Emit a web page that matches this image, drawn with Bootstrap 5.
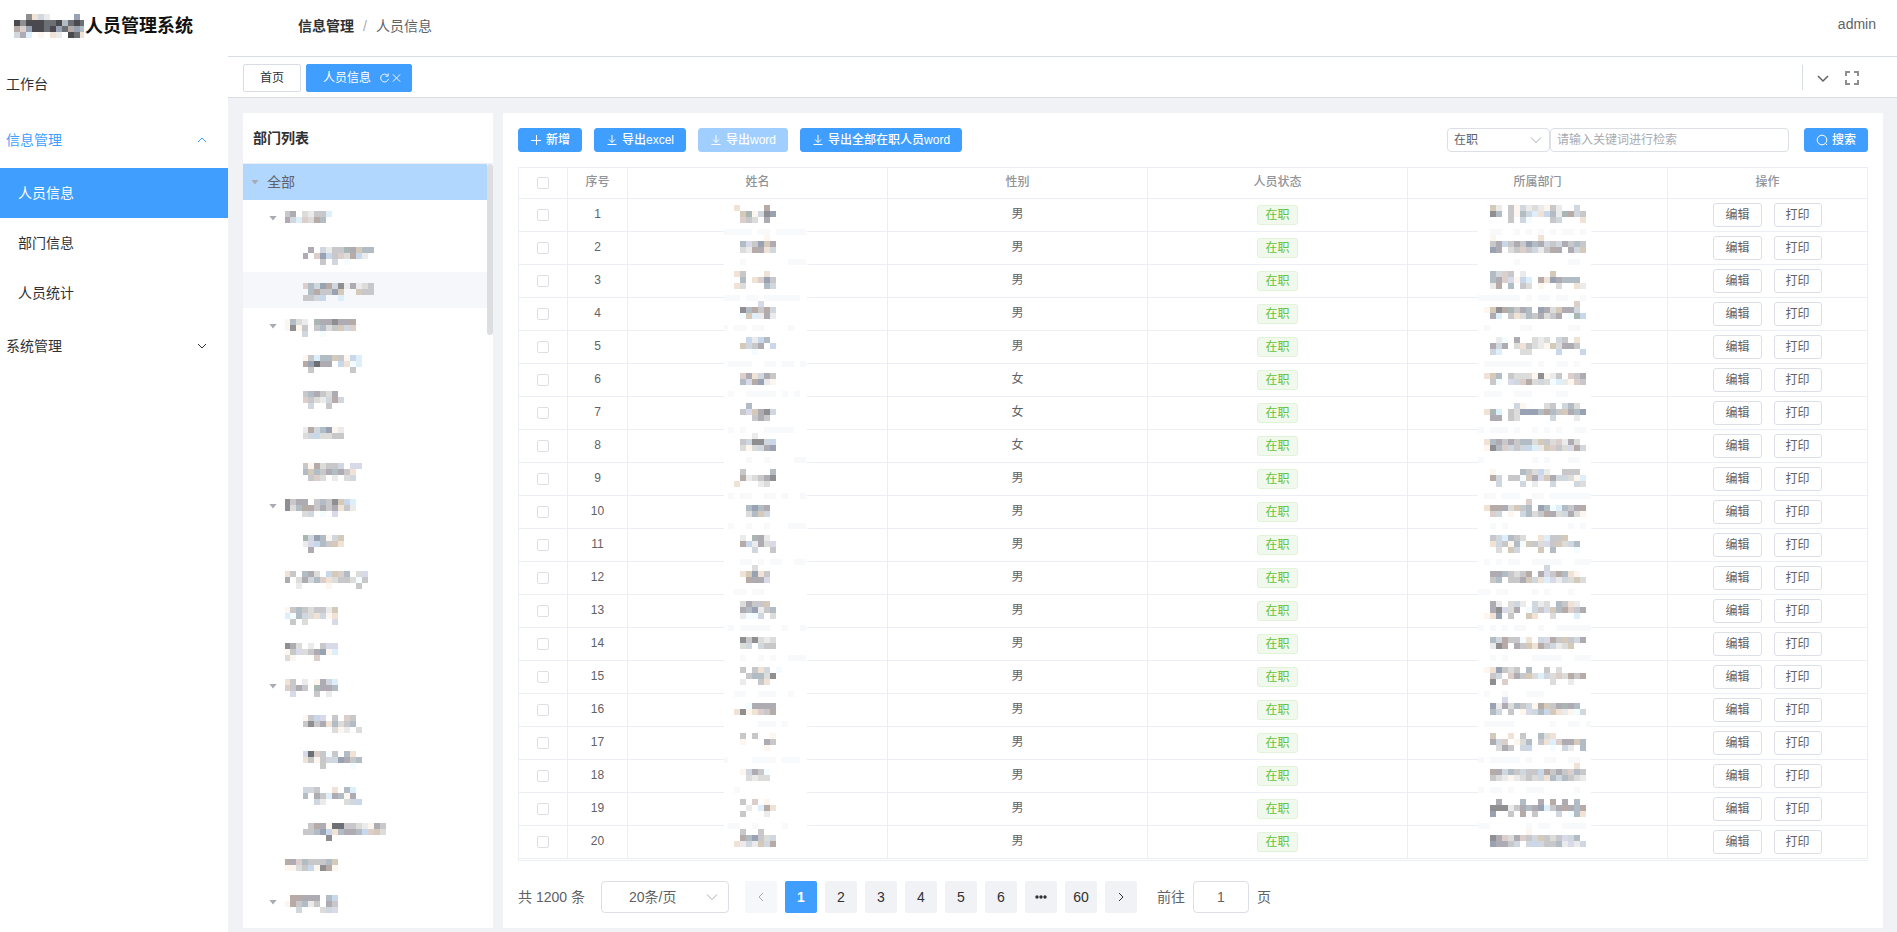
<!DOCTYPE html>
<html lang="zh-CN">
<head>
<meta charset="utf-8">
<meta name="viewport" content="width=device-width, initial-scale=1">
<title>人员管理系统</title>
<link href="https://cdn.jsdelivr.net/npm/bootstrap@5.3.0/dist/css/bootstrap.min.css" rel="stylesheet">
<style>
:root{--blue:#409eff;--line:#ebeef5;--edge:#dcdfe6;--txt:#606266;--dark:#303133}
body{font-family:"Liberation Sans","Noto Sans CJK SC",sans-serif;font-size:14px;line-height:20px;color:var(--txt);background:#fff}
a{text-decoration:none;color:inherit}
svg{display:block;flex:none}
.ico{fill:none;stroke:currentColor;stroke-width:1}
.page{min-width:0}
.g5{gap:5px}.g12{gap:12px}
/* sidebar */
.side{width:228px;flex:none;color:var(--dark)}
.brand{height:56px;padding:0 0 4px 14px;font-size:18px;font-weight:700;color:#111}
.brand svg{margin-right:1px}
.menu-main{height:56px;padding:0 20px 0 6px}
.menu-sub{height:50px;padding-left:18px}
.menu-sub.active{background:var(--blue);color:#fff}
.blue{color:var(--blue)}
/* top bars */
.topbar{height:57px;border-bottom:1px solid #d8dce5;padding:0 21px 4px 70px}
.topbar b{color:var(--dark)}
.slash{padding:0 9px;color:#a8abb2}
.tabs{height:41px;border-bottom:1px solid #d8dce5;padding:1px 38px 0 15px}
.tab-item{height:28px;border:1px solid #d8dce5;border-radius:2px;padding:0 16px;font-size:12px;color:var(--dark)}
.tab-item.active{background:var(--blue);border-color:var(--blue);color:#fff;padding:0 9px 0 16px}
.tab-item svg{width:11px}
.tab-item svg + svg{margin-left:1px}
.tab-tools{border-left:1px solid #d8dce5;height:25px;padding-left:14px;gap:16px}
.tab-tools .ico{stroke-width:1.5}
/* body */
.work{background:#f0f2f6;padding:15px 14px 4px 15px;gap:10px}
.panel{background:#fff}
.dept{width:250px;flex:none}
.dept h2{font-size:14px;font-weight:700;height:51px;line-height:50px;margin:0;padding-left:10px;border-bottom:1px solid var(--line);color:var(--dark)}
.tree{height:764px;overflow:hidden;position:relative}
.node{height:36px;margin-right:6px;padding-left:8px}
.node.lv1{padding-left:26px}.node.lv2{padding-left:44px}
.node.current{background:#b1d7ff}.node.hover{background:#f5f7fa}
.caret-box{width:8px;height:5px;margin-right:8px;flex:none}
.caret-box.open{background:#a8abb2;clip-path:polygon(0 0,100% 0,50% 100%)}
.thumb{position:absolute;right:0;top:0;width:6px;height:171px;border-radius:3px;background:#dddee0}
.main-panel{padding:15px;min-width:0}
.btn-s{height:24px;padding:0 11px;font-size:12px;line-height:20px;border-radius:3px;display:inline-flex;align-items:center;justify-content:center;gap:4px;border:1px solid var(--edge);background:#fff;color:var(--txt)}
.btn-p,.btn-p:disabled{background:var(--blue);border-color:var(--blue);color:#fff;font-weight:500}
.btn-p:disabled{background:#a0cfff;border-color:#a0cfff;opacity:1}
.fld{border:1px solid var(--edge);border-radius:4px;color:var(--txt);background:#fff;outline:0}
.fld::placeholder{color:#a8abb2}
.toolbar .fld{height:24px;font-size:12px;padding:0 6px}
.find-state{width:103px}.find-word{width:239px}.find-go{margin-left:15px}
.pick{position:relative}
.pick select{appearance:none;width:100%}
.pick svg{position:absolute;right:8px;top:50%;margin-top:-6px;color:#a8abb2;pointer-events:none}
.grid-wrap{border:1px solid var(--line);border-right:0;padding-bottom:1px;margin-top:15px}
.data{width:100%;table-layout:fixed;border-collapse:separate;border-spacing:0;text-align:center;font-size:12px;line-height:20px}
.data .w-ck{width:49px}.data .w-no{width:60px}.data .w-op{width:200px}
.data th,.data td{border-right:1px solid var(--line);border-bottom:1px solid var(--line);padding:0;position:relative}
.data th{height:31px;color:#909399;padding-bottom:2px;font-weight:500}
.data td{height:33px;padding-bottom:3px}
.data td.ops,.data td.st,.data td.ck{padding-bottom:0}
.box{appearance:none;width:12px;height:12px;border:1px solid var(--edge);border-radius:2px;background:#fff;display:block;margin:0 auto}
.data th .box{margin-top:2px}
.tagx{display:inline-block;height:20px;line-height:18px;padding:0 7px;border:1px solid #e1f3d8;background:#f0f9eb;color:#67c23a;border-radius:3px;vertical-align:middle}
.mz{position:absolute;top:0;overflow:hidden}
.mz.nm{left:calc(50% - 34px)}.mz.dp{left:calc(50% - 60px)}
/* pagination */
.pager{margin-top:20px;gap:8px}
.pager .fld{height:32px;font-size:14px}
.page-size{width:128px}
.page-size select{padding-left:27px}
.page-size svg{right:11px}
.goto-label{margin-left:12px}
.goto-box{width:56px}
.pg{min-width:32px;height:32px;border:0;border-radius:2px;background:#f0f2f5;color:var(--dark);padding:0;display:flex;align-items:center;justify-content:center}
.pg.active{background:var(--blue);color:#fff;font-weight:700}
.pg:disabled{background:#f5f7fa;color:#a8abb2}
</style>
</head>
<body>
<div class="d-flex min-vh-100">
  <aside class="side">
    <div class="brand d-flex align-items-center"><span id="logo"></span><span>人员管理系统</span></div>
    <nav>
      <a href="#" class="menu-main d-flex align-items-center">工作台</a>
      <a href="#" class="menu-main d-flex align-items-center justify-content-between blue">信息管理
        <svg class="ico" width="12" height="12" viewBox="0 0 12 12"><path d="M2 8l4-4 4 4"/></svg></a>
      <a href="#" class="menu-sub d-flex align-items-center active">人员信息</a>
      <a href="#" class="menu-sub d-flex align-items-center">部门信息</a>
      <a href="#" class="menu-sub d-flex align-items-center">人员统计</a>
      <a href="#" class="menu-main d-flex align-items-center justify-content-between">系统管理
        <svg class="ico" width="12" height="12" viewBox="0 0 12 12"><path d="M2 4l4 4 4-4"/></svg></a>
    </nav>
  </aside>
  <div class="page flex-grow-1 d-flex flex-column">
    <header class="topbar d-flex align-items-center justify-content-between">
      <nav class="d-flex"><a href="#"><b>信息管理</b></a><span class="slash">/</span><span>人员信息</span></nav>
      <a href="#" class="pb-1">admin</a>
    </header>
    <div class="tabs d-flex align-items-center justify-content-between">
      <div class="d-flex g5">
        <a href="#" class="tab-item d-flex align-items-center">首页</a>
        <a href="#" class="tab-item active d-flex align-items-center">人员信息
          <svg class="ico ms-2" width="12" height="12" viewBox="0 0 12 12"><path d="M9.600 3.500A4.300 4.300 0 1 0 10.300 7M10 1v3H7"/></svg>
          <svg class="ico" width="12" height="12" viewBox="0 0 12 12"><path d="M2 2l8 8M10 2l-8 8"/></svg></a>
      </div>
      <div class="tab-tools d-flex align-items-center">
        <svg class="ico" width="12" height="12" viewBox="0 0 12 12"><path d="M1 4l5 5 5-5"/></svg>
        <svg width="14" height="14" viewBox="0 0 14 14" fill="none" stroke="#8c8e92" stroke-width="2"><path d="M1 5V1h4M9 1h4v4M13 9v4H9M5 13H1V9"/></svg>
      </div>
    </div>
    <main class="work d-flex flex-grow-1">
      <section class="panel dept">
        <h2>部门列表</h2>
        <div class="tree" id="tree"><div class="thumb"></div>
          <div class="node current d-flex align-items-center"><span class="caret-box open"></span>全部</div>
        </div>
      </section>
      <section class="panel main-panel flex-grow-1">
        <div class="toolbar d-flex align-items-center justify-content-between">
          <div class="d-flex g12">
            <button class="btn-s btn-p"><svg class="ico" width="12" height="12" viewBox="0 0 12 12"><path d="M1 6.500h10M6.500 1v10"/></svg><span>新增</span></button>
            <button class="btn-s btn-p"><svg class="ico" width="12" height="12" viewBox="0 0 12 12"><path d="M1.500 10.500h9M6 1v7.500M3 5.500l3 3 3-3"/></svg><span>导出excel</span></button>
            <button class="btn-s btn-p" disabled><svg class="ico" width="12" height="12" viewBox="0 0 12 12"><path d="M1.500 10.500h9M6 1v7.500M3 5.500l3 3 3-3"/></svg><span>导出word</span></button>
            <button class="btn-s btn-p"><svg class="ico" width="12" height="12" viewBox="0 0 12 12"><path d="M1.500 10.500h9M6 1v7.500M3 5.500l3 3 3-3"/></svg><span>导出全部在职人员word</span></button>
          </div>
          <div class="d-flex">
            <label class="pick find-state"><select class="fld" aria-label="状态"><option>在职</option></select><svg class="ico" width="12" height="12" viewBox="0 0 12 12"><path d="M1 3.500l5 5 5-5"/></svg></label>
            <input class="fld find-word" placeholder="请输入关键词进行检索" aria-label="关键词">
            <button class="btn-s btn-p find-go"><svg class="ico" width="12" height="12" viewBox="0 0 12 12"><circle cx="6" cy="6" r="4.800"/><path d="M9.500 9.500l1.500 1.500"/></svg><span>搜索</span></button>
          </div>
        </div>
        <div class="grid-wrap">
          <table class="data">
            <colgroup><col class="w-ck"><col class="w-no"><col><col><col><col><col class="w-op"></colgroup>
            <thead><tr><th><input type="checkbox" class="box" aria-label="全选"></th><th>序号</th><th>姓名</th><th>性别</th><th>人员状态</th><th>所属部门</th><th>操作</th></tr></thead>
            <tbody id="rows"></tbody>
          </table>
        </div>
        <div class="pager d-flex align-items-center">
          <span>共 1200 条</span>
          <label class="pick page-size ms-2"><select class="fld" aria-label="每页条数"><option>20条/页</option></select><svg class="ico" width="12" height="12" viewBox="0 0 12 12"><path d="M1 3.500l5 5 5-5"/></svg></label>
          <button class="pg ms-2" disabled aria-label="上一页"><svg class="ico" width="12" height="12" viewBox="0 0 12 12"><path d="M8 2L4 6l4 4"/></svg></button>
          <button class="pg active">1</button><button class="pg">2</button><button class="pg">3</button><button class="pg">4</button><button class="pg">5</button><button class="pg">6</button>
          <button class="pg" aria-label="更多"><svg width="14" height="14" viewBox="0 0 14 14" fill="currentColor"><circle cx="3" cy="7" r="1.700"/><circle cx="7" cy="7" r="1.700"/><circle cx="11" cy="7" r="1.700"/></svg></button>
          <button class="pg">60</button>
          <button class="pg" aria-label="下一页"><svg class="ico" width="12" height="12" viewBox="0 0 12 12"><path d="M4 2l4 4-4 4"/></svg></button>
          <label for="goto" class="goto-label">前往</label>
          <input id="goto" class="fld goto-box text-center" value="1">
          <span>页</span>
        </div>
      </section>
    </main>
  </div>
</div>
<script src="https://cdn.jsdelivr.net/npm/bootstrap@5.3.0/dist/js/bootstrap.bundle.min.js"></script>
<script>
// Private values are shown as mosaics: one letter per 6px tile, "/" starts a new line.
const tone={a:'#8f8f92',b:'#aeacb2',c:'#c8c7c9',d:'#dcdcda',e:'#ebebeb',f:'#b2bcc4',g:'#d0d7df',h:'#dceffb',i:'#c8d8ea',j:'#b6aba6',k:'#d5c9ba',l:'#f1e2d6',m:'#fcf6ee',n:'#dccecb',o:'#98a2b2',p:'#d8daea',q:'#aab6b3',r:'#6c7074',s:'#f3fcff',R:'#4a4a4e','~':'#f8f9fb'};
function mosaic(map,w,h,x0,y0,cls,back){
  let s=back||'';
  map.split('/').forEach((l,r)=>[...l].forEach((c,i)=>{if(tone[c])s+=`<rect x="${x0+i*6}" y="${y0+r*6}" width="6" height="6" fill="${tone[c]}"/>`}));
  return `<svg class="${cls}" width="${w}" height="${h}" shape-rendering="crispEdges" aria-hidden="true">${s}</svg>`;
}
document.getElementById('logo').innerHTML=mosaic('..alge....o/RaRRRrrRfrRr/jnoRRrRorjof/gbh.m.le.Rrl',70,24,0,0,'');
const tree=[
[1,1,'cb.decch/bghndjf'],[2,0,'....b.geccqbkff/...b.noicndjie/......c.g.s'],[2,0,'...nfgojgaebedc/....fjccok..kcc/...ccgi..h'],
[1,1,'mfde.qbbabbj/mamc.cfdckgn/...g..s'],[2,0,'...mchffkcmih/...jorbb.ilsh/....c......c'],[2,0,'...cfbcdb/...ncdegjg/....g..c'],
[2,0,'...ejgfome/...dgiddcc'],[2,0,'...cmjdccg.pp/...fkfcbfbcl/....cnd.e.dg'],[1,1,'acbb.cfcakih/adfjjcbcblce/...dg.s.p'],
[2,0,'...qgofmgk/...epifckl/....b'],[1,0,'lc.fbd.iknf.dp/b.dbgfnldccdsc/..e....m....c'],[1,0,'mcfcdccek/hsfgdlgml/.c.d....p'],
[1,0,'abd.e.cpp/mcpdcbomh/dm...n'],[1,1,'lc.e.mbgh/ncbc.qbbf/.p...c.e'],[2,0,'...mcip.c.nc/...cacblfdcf/........dme.d'],
[2,0,'...prncsc.fl/...lcmcggobcf/......c....s'],[2,0,'...ggc..l.fh/...f.bchbfmb/.....ge...dgi'],
[2,0,'....cjbmrrccdembc/...ccfoilfbbfinkd/.......a'],[1,0,'jbnfcccfk/mmdcimajm'],[1,1,'.jjbbb.fi/mjcfec.bc/..g...dgp']];
document.getElementById('tree').insertAdjacentHTML('beforeend',tree.map(([lv,open,m],i)=>{
  const cut=lv===2?19:1;
  return `<div class="node lv${lv} d-flex align-items-center${i===2?' hover':''}"><span class="caret-box${open?' open':''}"></span>${mosaic(m,150,36,-cut,11,'')}</div>`}).join(''));
const names=['..l....j/...kqmgao/...ncd.b//~~~~~.~~.~~~~~','.......m/...fpcokb/...dejblg//...~.......~~~','..lc...l/...f.lnoc/..ld...fg//~~~.~~.~~~~~~',
'......p/...afjcjg/...skhebe//~.~~.~~....~','....ieif/...kgcb.i/.....s//.~~~~..~~.~~.~','/...nblgbc/...fpjoem//.~..~~~~~.~.~','....f/...cpkbag/.....cbc//.~.~...~~~~~',
'.....e/...cgaagi/...dmdgbo//....~..~....~~','...c....f/...jedcba/..l...ed//.~.~~..~~.~..~','/....fofb/....dfkg//.~..~..~...~~~','...e.qbe/...jiebdp/.....g..c//...~~.~.~~..~~',
'.....d/...lkolc/....jbbp//..~~.~~','...dbcck/...bfoecf/...essg.d//.~.~~~~~..~..~','/...acaded/...dg.gcc//...~..~.~..~~~','...c.clg.s/....cffda/...e..cl//..~~..~~~..~',
'/....sbbbb/..lamlncj//......~~~.~','...c.c..m/...m...bc/.......m//~....~~~~.~~~','/...mgbcs/....dedd//..~','...c.n.m/....e.hjl/...c...e//.~~..~....~','...c..c/...jfocdg/..legekgj'];
const depts=['..ke.cmgedemce..g/..af.cmfghlifeqjgc/.....c.gs...cg...l//..~~..~.~.~.~.~~.~','..m.......l/..cbicbcofbgcgbcfc/..ob.dcncgecjb.bgk//......~........~~',
'..fgnc.e....k/..fbnpmih.jlobfff/..ej.f.cd.m..d..le//~~~~~~~.~.~~.~~..~','................n/.mkajqcbf.obdkbbg/..bh.cldfcbdcb.sqi//.~.....~~......~~',
'...es.b..ded.gc.l/..bgb.dlcdemkdbbc/..gh...dd....i...i//.~~~~~~~~.~..~~.~','/.lkf.cdddmamec.n.cb/..cs.pgnjdgdshemnc//.~~~..~~~....~~'.replace('.cb/','cb/'),
'......gm...dc.gfd/.lqh.cdooofjfckbfo/..bb.cd.....g...e//~.~~~.~..~.~.~..~~','/.lfbcbcffdkcdnebd/.mafngcgihekncdpjg//~........~.~...~~',
'..m....fcdie..ccc/..jg.ccskbpkbggdmh/...g...g.e..g...gd//.~~.~~~..~~.~~~~~~~','........n/.ljjbdkcf.ofshfcbj/..ng.m.gfdcjbdgbdm//..~.~..........~.~',
'..cghfcd..lhcck/..lgcmfskcdpckdgf/...d.kg...k.f...s//.~.~.~~..~~~~~..~~~','...........g/..bbfcdcj.bpcjflm/..cf.ccbkglhpegdkd//~~.~~....~.~...~',
'..be.dge.ged.fcle/..bapdb.sgcpkfjncb/.mlo.c..kl..d...h//~.~.~.~~..~..~~~~~~','/..fgjccsl.gpjckcgb/..eaj.bckljcgedk//..~.~....~~~~~..~~~',
'.mlocdc.f..c.d/..cg.nbckdhgdndjcj/..a.n.......d..e//.~..~...~~~','....p/..oebdfcgmjkcbqbf/..fg.c.mpgfiklemsg//.~~~~~......~..~~.~',
'..k..l.c..fdl/..bgn.mdf.clhnbbkf/...dbc.gi...s.ge.f//~.~~~~~.~..~~..~~','................l/..jbgfcgccijcbcnfc/..cdemedcdglfgfcde//~.~~.~..~~~.....~',
'...b...f..b.j.b.f/..aaaecbfbohcbjbfj/..o..c.j.c...g.sfl//~~......~.~~..~~~~','........m/..abndbncgkcdcpgf/..obbcg.gigccfepeg'];
document.getElementById('rows').innerHTML=names.map((n,i)=>{
  const y=i%2?3:6, last=i===19;
  const cover=w=>`<rect y="6" width="${w}" height="${last?26:30}" fill="#fff"/>`;
  return `<tr><td class="ck"><input type="checkbox" class="box" aria-label="选择第${i+1}行"></td><td>${i+1}</td><td>${mosaic(n,83,last?32:36,-2,y,'mz nm',cover(83))}</td><td>${i>4&&i<8?'女':'男'}</td><td class="st"><span class="tagx">在职</span></td><td>${mosaic(depts[i],113,last?32:36,0,y,'mz dp',cover(113))}</td><td class="ops"><div class="d-flex justify-content-center g12"><button class="btn-s">编辑</button><button class="btn-s">打印</button></div></td></tr>`}).join('');
</script>
</body>
</html>
